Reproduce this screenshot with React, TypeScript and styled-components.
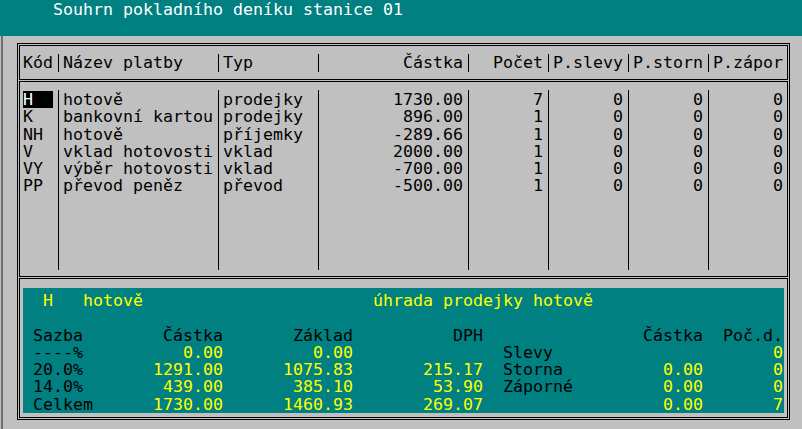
import styled, { createGlobalStyle } from "styled-components";

const TEAL = "#008080";
const GRAY = "#c0c0c0";
const YELLOW = "#ffff00";
const ROW = 17.3;

const GlobalStyle = createGlobalStyle`
  html, body {
    margin: 0;
    padding: 0;
    background: ${GRAY};
  }
  body {
    font-family: "DejaVu Sans Mono", "Liberation Mono", monospace;
    font-size: 16.61px;
    line-height: ${ROW}px;
    color: #000;
  }
`;

type Align = "left" | "right";

type Column = {
  title: string;
  chars: number;
  align: Align;
};

const columns: Column[] = [
  { title: "Kód", chars: 3, align: "left" },
  { title: "Název platby", chars: 15, align: "left" },
  { title: "Typ", chars: 9, align: "left" },
  { title: "Částka", chars: 14, align: "right" },
  { title: "Počet", chars: 7, align: "right" },
  { title: "P.slevy", chars: 7, align: "right" },
  { title: "P.storn", chars: 7, align: "right" },
  { title: "P.zápor", chars: 7, align: "right" },
];

const payments = [
  ["H", "hotově", "prodejky", "1730.00", "7", "0", "0", "0"],
  ["K", "bankovní kartou", "prodejky", "896.00", "1", "0", "0", "0"],
  ["NH", "hotově", "příjemky", "-289.66", "1", "0", "0", "0"],
  ["V", "vklad hotovosti", "vklad", "2000.00", "1", "0", "0", "0"],
  ["VY", "výběr hotovosti", "vklad", "-700.00", "1", "0", "0", "0"],
  ["PP", "převod peněz", "převod", "-500.00", "1", "0", "0", "0"],
];

// summary grid: one entry per cell, yellow ones are values
type SumCell = { text: string; hi?: boolean };
const sumColumns: { width: number; align: Align; pad?: number }[] = [
  { width: 80, align: "left" },
  { width: 110, align: "right" },
  { width: 130, align: "right" },
  { width: 130, align: "right" },
  { width: 110, align: "left", pad: 20 },
  { width: 110, align: "right" },
  { width: 80, align: "right" },
];

const y = (text: string): SumCell => ({ text, hi: true });
const k = (text: string): SumCell => ({ text });

const summaryRows: SumCell[][] = [
  [k("Sazba"), k("Částka"), k("Základ"), k("DPH"), k(""), k("Částka"), k("Poč.d.")],
  [k("----%"), y("0.00"), y("0.00"), y(""), k("Slevy"), y(""), y("0")],
  [k("20.0%"), y("1291.00"), y("1075.83"), y("215.17"), k("Storna"), y("0.00"), y("0")],
  [k("14.0%"), y("439.00"), y("385.10"), y("53.90"), k("Záporné"), y("0.00"), y("0")],
  [k("Celkem"), y("1730.00"), y("1460.93"), y("269.07"), k(""), y("0.00"), y("7")],
];

export default function App() {
  return (
    <>
      <GlobalStyle />
      <Screen>
        <TitleBar>Souhrn pokladního deníku stanice 01</TitleBar>
        <Desk>
          <Frame>
            <HeaderBox>
              <HeaderRow>
                {columns.map((col, i) => (
                  <HeaderCell
                    key={col.title}
                    $chars={col.chars}
                    $align={col.align}
                    $first={i === 0}
                    $last={i === columns.length - 1}
                  >
                    {col.title}
                  </HeaderCell>
                ))}
              </HeaderRow>
            </HeaderBox>

            <ListBox>
              <List>
                {columns.map((col, ci) => (
                  <ListColumn
                    key={col.title}
                    $chars={col.chars}
                    $align={col.align}
                    $first={ci === 0}
                    $last={ci === columns.length - 1}
                  >
                    {payments.map((row, ri) => (
                      <ListCell key={ri}>
                        {ci === 0 && ri === 0 ? (
                          <Cursor>{row[ci]}</Cursor>
                        ) : (
                          row[ci]
                        )}
                      </ListCell>
                    ))}
                  </ListColumn>
                ))}
              </List>
            </ListBox>

            <DetailBox>
              <DetailPanel>
                <InfoRow>
                  <InfoCode>H</InfoCode>
                  <InfoName>hotově</InfoName>
                  <span>úhrada prodejky hotově</span>
                </InfoRow>
                <BlankRow />
                {summaryRows.map((row, ri) => (
                  <SumRow key={ri}>
                    {row.map((cell, ci) => (
                      <SumCellBox
                        key={ci}
                        $width={sumColumns[ci].width}
                        $align={sumColumns[ci].align}
                        $pad={sumColumns[ci].pad ?? 0}
                        $hi={!!cell.hi}
                      >
                        {cell.text}
                      </SumCellBox>
                    ))}
                  </SumRow>
                ))}
              </DetailPanel>
            </DetailBox>
          </Frame>
        </Desk>
      </Screen>
    </>
  );
}

const Screen = styled.div`
  width: 802px;
  height: 429px;
  display: flex;
  flex-direction: column;
  overflow: hidden;
  white-space: pre;
`;

const TitleBar = styled.div`
  height: 36px;
  flex: none;
  box-sizing: border-box;
  padding: 1px 0 0 53px;
  background: ${TEAL};
  color: #fff;
`;

const Desk = styled.div`
  flex: 1;
  padding: 7px 0 0 17px;
  box-shadow: inset 1px 0 0 ${GRAY}, inset 3px 0 0 #6f6f6f;
`;

const Frame = styled.div`
  width: 773px;
  height: 377px;
  box-sizing: border-box;
  border: 1px solid #000;
  padding: 1px;
  display: flex;
  flex-direction: column;
  gap: 1px;
`;

const Box = styled.div`
  box-sizing: border-box;
  border: 1px solid #000;
  flex: none;
`;

const HeaderBox = styled(Box)`
  height: 35px;
  padding: 8px 3px 0;
`;

const ListBox = styled(Box)`
  height: 196px;
  padding: 8px 3px 0;
`;

const DetailBox = styled(Box)`
  height: 140px;
  padding: 9px 3px 3px;
`;

type CellProps = {
  $chars: number;
  $align: Align;
  $first: boolean;
  $last: boolean;
};

const cellBox = ({ $chars, $first, $last, $align }: CellProps) => `
  box-sizing: content-box;
  width: ${$chars * 10}px;
  padding-left: ${$first ? 0 : 4}px;
  padding-right: ${$last ? 0 : 5}px;
  border-right: ${$last ? "none" : "1px solid #000"};
  text-align: ${$align};
`;

const HeaderRow = styled.div`
  display: flex;
`;

const HeaderCell = styled.div<CellProps>`
  ${(p) => cellBox(p)}
  height: 18px;
`;

const List = styled.div`
  display: flex;
  height: 180px;
`;

const ListColumn = styled.div<CellProps>`
  ${(p) => cellBox(p)}
  padding-top: 1px;
`;

const ListCell = styled.div`
  height: ${ROW}px;
`;

const Cursor = styled.span`
  display: inline-block;
  width: 30px;
  height: 17px;
  background: #000;
  color: #fff;
`;

const DetailPanel = styled.div`
  height: 125px;
  box-sizing: border-box;
  padding-top: 4px;
  background: ${TEAL};
`;

const InfoRow = styled.div`
  display: flex;
  padding-left: 20px;
  height: ${ROW}px;
  color: ${YELLOW};
`;

const InfoCode = styled.span`
  width: 40px;
`;

const InfoName = styled.span`
  width: 290px;
`;

const BlankRow = styled.div`
  height: ${ROW}px;
`;

const SumRow = styled.div`
  display: flex;
  padding-left: 10px;
  height: ${ROW}px;
`;

const SumCellBox = styled.div<{
  $width: number;
  $align: Align;
  $pad: number;
  $hi: boolean;
}>`
  box-sizing: border-box;
  width: ${(p) => p.$width}px;
  padding-left: ${(p) => p.$pad}px;
  text-align: ${(p) => p.$align};
  color: ${(p) => (p.$hi ? YELLOW : "#000")};
`;
